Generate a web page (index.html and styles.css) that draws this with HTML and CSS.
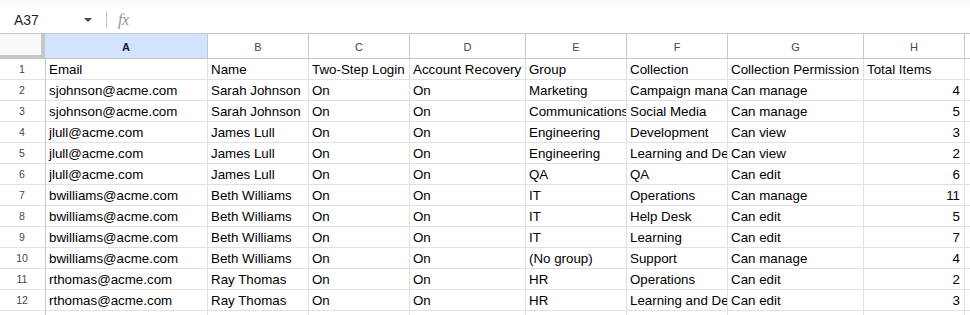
FILE: index.html
```html
<!DOCTYPE html>
<html>
<head>
<meta charset="utf-8">
<link rel="stylesheet" href="styles.css">
</head>
<body>
<div class="top-strip"></div>
<div class="formula-bar">
  <div class="name-box">
    <span class="cell-ref">A37</span>
    <svg class="caret" width="8" height="4" viewBox="0 0 8 4"><path d="M0 0h8L4 4z" fill="#444746"/></svg>
  </div>
  <div class="divider"></div>
  <span class="fx">fx</span>
</div>
<div class="sheet">
  <div class="corner"></div>
  <div class="col-head selected">A</div>
  <div class="col-head">B</div>
  <div class="col-head">C</div>
  <div class="col-head">D</div>
  <div class="col-head">E</div>
  <div class="col-head">F</div>
  <div class="col-head">G</div>
  <div class="col-head">H</div>
  <div class="col-head"></div>

  <div class="row-head">1</div><div class="cell">Email</div><div class="cell">Name</div><div class="cell">Two-Step Login</div><div class="cell">Account Recovery</div><div class="cell">Group</div><div class="cell">Collection</div><div class="cell">Collection Permission</div><div class="cell">Total Items</div><div class="cell"></div>
  <div class="row-head">2</div><div class="cell">sjohnson@acme.com</div><div class="cell">Sarah Johnson</div><div class="cell">On</div><div class="cell">On</div><div class="cell">Marketing</div><div class="cell">Campaign management</div><div class="cell">Can manage</div><div class="cell num">4</div><div class="cell"></div>
  <div class="row-head">3</div><div class="cell">sjohnson@acme.com</div><div class="cell">Sarah Johnson</div><div class="cell">On</div><div class="cell">On</div><div class="cell">Communications</div><div class="cell">Social Media</div><div class="cell">Can manage</div><div class="cell num">5</div><div class="cell"></div>
  <div class="row-head">4</div><div class="cell">jlull@acme.com</div><div class="cell">James Lull</div><div class="cell">On</div><div class="cell">On</div><div class="cell">Engineering</div><div class="cell">Development</div><div class="cell">Can view</div><div class="cell num">3</div><div class="cell"></div>
  <div class="row-head">5</div><div class="cell">jlull@acme.com</div><div class="cell">James Lull</div><div class="cell">On</div><div class="cell">On</div><div class="cell">Engineering</div><div class="cell">Learning and Development</div><div class="cell">Can view</div><div class="cell num">2</div><div class="cell"></div>
  <div class="row-head">6</div><div class="cell">jlull@acme.com</div><div class="cell">James Lull</div><div class="cell">On</div><div class="cell">On</div><div class="cell">QA</div><div class="cell">QA</div><div class="cell">Can edit</div><div class="cell num">6</div><div class="cell"></div>
  <div class="row-head">7</div><div class="cell">bwilliams@acme.com</div><div class="cell">Beth Williams</div><div class="cell">On</div><div class="cell">On</div><div class="cell">IT</div><div class="cell">Operations</div><div class="cell">Can manage</div><div class="cell num">11</div><div class="cell"></div>
  <div class="row-head">8</div><div class="cell">bwilliams@acme.com</div><div class="cell">Beth Williams</div><div class="cell">On</div><div class="cell">On</div><div class="cell">IT</div><div class="cell">Help Desk</div><div class="cell">Can edit</div><div class="cell num">5</div><div class="cell"></div>
  <div class="row-head">9</div><div class="cell">bwilliams@acme.com</div><div class="cell">Beth Williams</div><div class="cell">On</div><div class="cell">On</div><div class="cell">IT</div><div class="cell">Learning</div><div class="cell">Can edit</div><div class="cell num">7</div><div class="cell"></div>
  <div class="row-head">10</div><div class="cell">bwilliams@acme.com</div><div class="cell">Beth Williams</div><div class="cell">On</div><div class="cell">On</div><div class="cell">(No group)</div><div class="cell">Support</div><div class="cell">Can manage</div><div class="cell num">4</div><div class="cell"></div>
  <div class="row-head">11</div><div class="cell">rthomas@acme.com</div><div class="cell">Ray Thomas</div><div class="cell">On</div><div class="cell">On</div><div class="cell">HR</div><div class="cell">Operations</div><div class="cell">Can edit</div><div class="cell num">2</div><div class="cell"></div>
  <div class="row-head">12</div><div class="cell">rthomas@acme.com</div><div class="cell">Ray Thomas</div><div class="cell">On</div><div class="cell">On</div><div class="cell">HR</div><div class="cell">Learning and Development</div><div class="cell">Can edit</div><div class="cell num">3</div><div class="cell"></div>
  <div class="row-head"></div><div class="cell"></div><div class="cell"></div><div class="cell"></div><div class="cell"></div><div class="cell"></div><div class="cell"></div><div class="cell"></div><div class="cell"></div><div class="cell"></div>
</div>
</body>
</html>
```
FILE: styles.css
```css
* { box-sizing: border-box; }
html, body { margin: 0; padding: 0; background: #fff; overflow: hidden; }
body { font-family: "Liberation Sans", Arial, sans-serif; color: #000; }

.top-strip { height: 6px; background: #f9fbfd; }

.formula-bar {
  height: 28px;
  display: flex;
  align-items: center;
  border-bottom: 1px solid #c4c7c5;
  background: #fff;
}
.name-box {
  width: 106px;
  display: flex;
  align-items: center;
  justify-content: space-between;
  padding: 0 14px 0 14px;
}
.cell-ref { font-size: 14px; color: #1f1f1f; }
.caret { display: block; }
.divider { width: 1px; height: 17px; background: #c4c7c5; }
.fx {
  margin-left: 11px;
  font-family: "Liberation Serif", serif;
  font-style: italic;
  font-size: 16px;
  color: #8e9a8e;
  letter-spacing: -0.5px;
}

.sheet {
  display: grid;
  grid-template-columns: 46px 162px 101px 101px 116px 101px 101px 136px 101px 1fr;
  grid-template-rows: 25px;
  grid-auto-rows: 21px;
}

.corner {
  background: #f8f9fa;
  border-right: 4px solid #c4c7c5;
  border-bottom: 4px solid #c4c7c5;
  margin-right: 1px;
}
.col-head {
  display: flex;
  align-items: center;
  justify-content: center;
  font-size: 11px;
  color: #444746;
  border-right: 1px solid #c4c7c5;
  border-bottom: 1px solid #c4c7c5;
  padding-top: 1px;
}
.col-head.selected {
  background: #d3e3fd;
  color: #0b1a3a;
  font-weight: bold;
  margin-left: -1px;
}

.row-head {
  display: flex;
  align-items: center;
  justify-content: center;
  font-size: 10.5px;
  color: #444746;
  border-right: 1px solid #c4c7c5;
  border-bottom: 1px solid #e1e1e1;
  padding-right: 1px;
}

.cell {
  font-size: 13.33px;
  line-height: 20px;
  padding: 1px 3px 0 3px;
  white-space: nowrap;
  overflow: hidden;
  border-right: 1px solid #e1e1e1;
  border-bottom: 1px solid #e1e1e1;
}
.cell.num { text-align: right; padding-right: 4px; }
```
